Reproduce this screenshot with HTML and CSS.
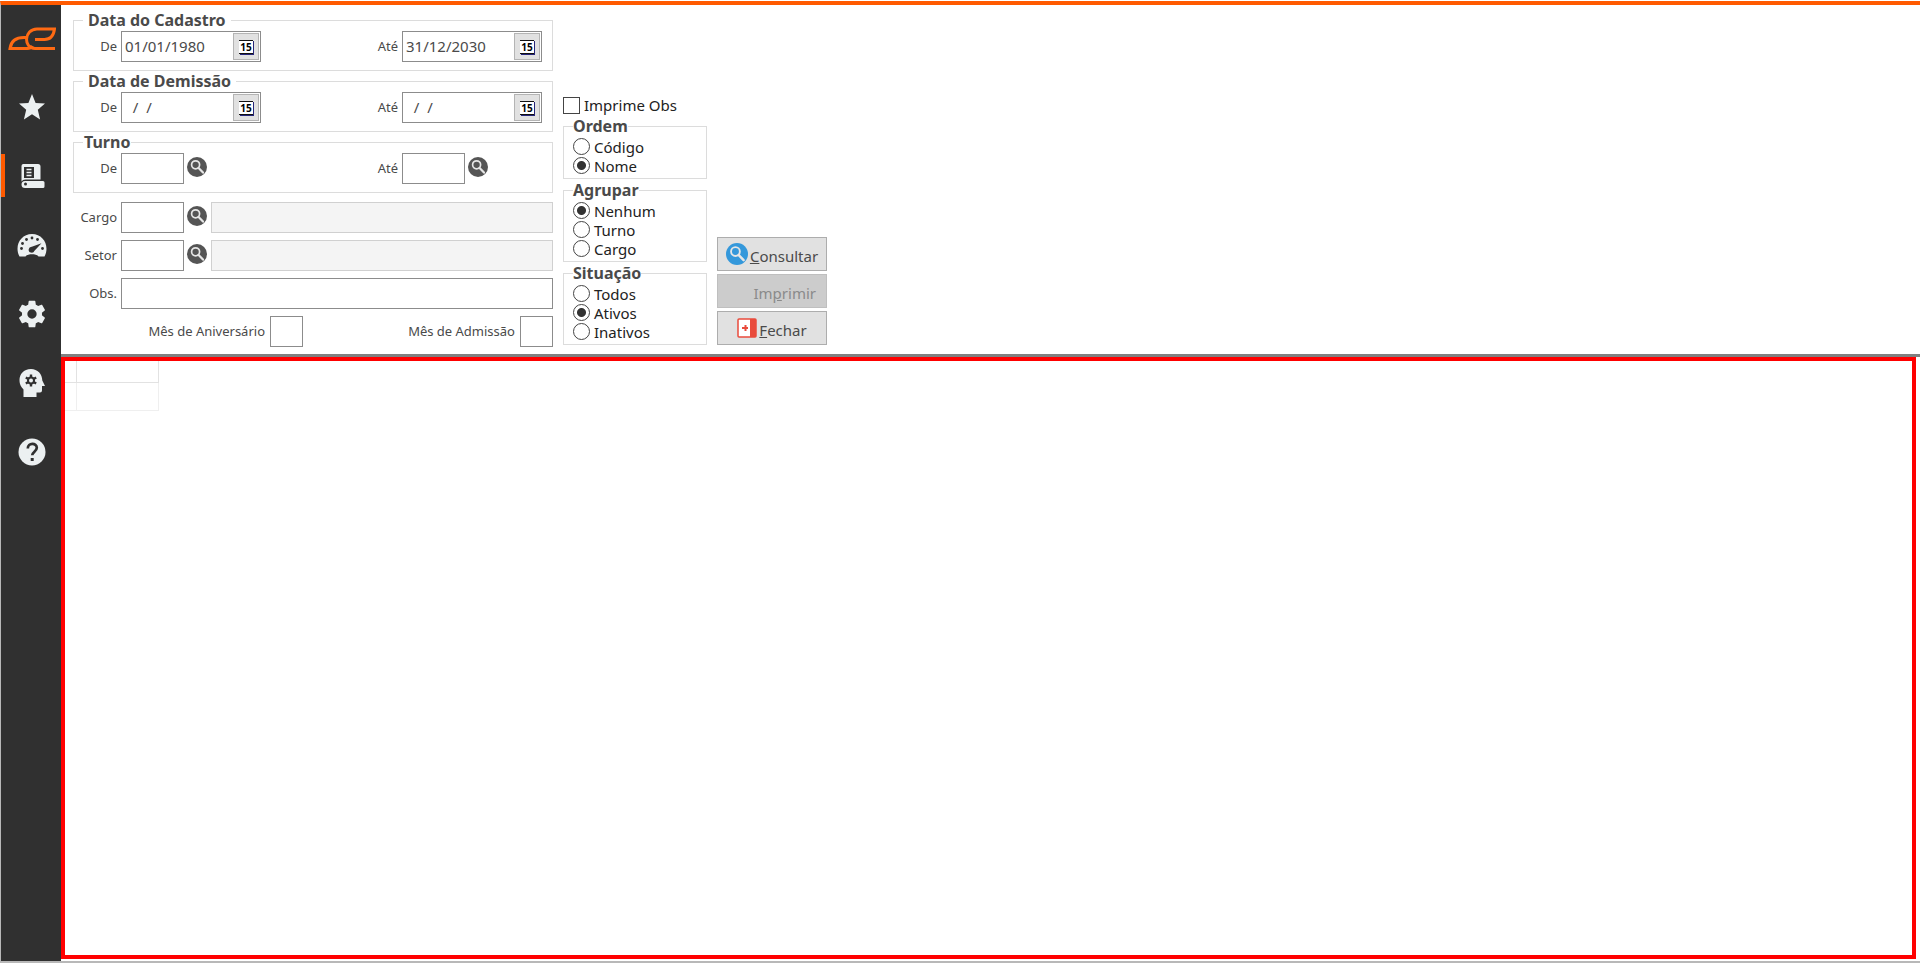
FILE: index.html
```html
<!DOCTYPE html>
<html lang="pt-BR">
<head>
  <meta charset="UTF-8">
  <meta name="viewport" content="width=device-width, initial-scale=1.0">
  <title>Consulta de Funcionários</title>
  <link rel="stylesheet" href="styles.css">
</head>
<body>
  <svg class="sprite" aria-hidden="true">
    <symbol id="lens" viewBox="0 0 20 20">
      <circle cx="10" cy="10" r="10"/>
      <circle cx="8.6" cy="7.8" r="4" fill="none" stroke="#e6e6e6" stroke-width="1.7"/>
      <path d="M11.6 11l4.4 4.6" stroke="#e6e6e6" stroke-width="2.200" stroke-linecap="round"/>
    </symbol>
  </svg>

  <div class="app">
    <nav class="sidebar">
      <a href="#" class="logo" aria-label="Início">
        <svg width="48" height="24" viewBox="0 0 48 24" fill="none" stroke="#ff6a13" stroke-width="3">
          <path d="M47 21.500H27C15 21.500 16 2 29 2h17.500c-1 7.500-4 10.500-10 10.500H27"/>
          <path d="M20 10.500h-4C8 10.500 3 14 2 21.500h17.500c2 0 4-1 5-2.500"/>
        </svg>
      </a>
      <a href="#" class="item" aria-label="Favoritos">
        <svg width="28" height="28" viewBox="0 0 28 28" fill="#ecf0f1">
          <path d="M14 1l3.600 8.900 9.400.7-7.200 6.100 2.300 9.700L14 21.300l-8.100 5.100 2.300-9.700L1 10.600l9.400-.7z"/>
        </svg>
      </a>
      <a href="#" class="item active" aria-label="Cadastros">
        <svg width="28" height="28" viewBox="0 0 28 28" fill="#ecf0f1">
          <path d="M5 2h15a2.500 2.500 0 0 1 2.500 2.500V17.500H7.500c-2 0-3 .7-4 2V4A2 2 0 0 1 5 2z"/>
          <path d="M7 19h18a1.500 1.500 0 0 1 1.500 1.500v4A1.500 1.500 0 0 1 25 26H7a3.500 3.500 0 0 1 0-7z"/>
          <path d="M6 5h10v11H6z" fill="#303030"/>
          <path d="M8.500 7.500h5M8.500 10.500h5M8.500 13.500h5" stroke="#ecf0f1" stroke-width="1.500"/>
          <circle cx="7.500" cy="22" r="1.500" fill="#303030"/>
        </svg>
      </a>
      <a href="#" class="item" aria-label="Painel">
        <svg width="30" height="28" viewBox="0 0 30 28" fill="#ecf0f1">
          <path d="M2.500 25.500C-3 15 3.500 3 15 3s18 12 12.500 22.500h-6c-1.500-3-11.500-3-13 0z"/>
          <g fill="#303030">
            <circle cx="15" cy="7" r="1.400"/><circle cx="9.500" cy="8.500" r="1.400"/><circle cx="20.500" cy="8.500" r="1.400"/>
            <circle cx="5.500" cy="12.500" r="1.400"/><circle cx="4.500" cy="17.500" r="1.400"/><circle cx="25.500" cy="17.500" r="1.400"/>
            <path d="M24.500 12.200l-7 7.500a3 3 0 1 1-2.700-4z"/>
          </g>
        </svg>
      </a>
      <a href="#" class="item" aria-label="Configurações">
        <svg width="32" height="32" viewBox="0 0 24 24" fill="#ecf0f1">
          <path d="M12 15.500A3.500 3.500 0 0 1 8.500 12 3.500 3.500 0 0 1 12 8.500a3.500 3.500 0 0 1 3.500 3.500 3.500 3.500 0 0 1-3.500 3.500m7.430-2.530c.04-.32.07-.64.07-.97s-.03-.66-.07-1l2.110-1.630c.19-.15.24-.42.12-.64l-2-3.460c-.12-.22-.39-.31-.61-.22l-2.490 1c-.52-.39-1.060-.73-1.690-.98l-.37-2.650A.506.506 0 0 0 14 2h-4c-.25 0-.46.18-.5.420l-.37 2.650c-.63.25-1.170.59-1.690.98l-2.490-1c-.22-.09-.49 0-.61.22l-2 3.460c-.13.22-.07.49.12.64L4.570 11c-.04.34-.07.67-.07 1s.03.65.07.97l-2.110 1.660c-.19.15-.25.42-.12.64l2 3.460c.12.22.39.3.61.22l2.490-1.010c.52.4 1.060.74 1.690.99l.37 2.650c.04.24.25.42.5.42h4c.25 0 .46-.18.5-.42l.37-2.650c.63-.26 1.170-.59 1.690-.99l2.490 1.010c.22.08.49 0 .61-.22l2-3.460c.12-.22.07-.49-.12-.64z"/>
        </svg>
      </a>
      <a href="#" class="item" aria-label="Inteligência">
        <svg width="28" height="30" viewBox="0 0 28 30" fill="#ecf0f1">
          <path d="M13 1C5.500 1 1.500 6.500 1.500 12c0 5 2 7 4 9.500V29h13v-4.500h3.500a2 2 0 0 0 2-2V18h3l-2.700-5.500C24.300 6 19.500 1 13 1z"/>
          <path d="M13 6.500v12M7.800 9.500l10.400 6M18.200 9.500l-10.400 6" stroke="#303030" stroke-width="2.400"/>
          <circle cx="13" cy="12.500" r="4" fill="#303030"/>
          <circle cx="13" cy="12.500" r="2"/>
        </svg>
      </a>
      <a href="#" class="item" aria-label="Ajuda">
        <svg width="28" height="28" viewBox="0 0 28 28">
          <circle cx="14" cy="14" r="13.500" fill="#ecf0f1"/>
          <path d="M9.800 10.500c0-6 9-6 9-.7 0 3.700-4.600 4-4.600 7.500" fill="none" stroke="#303030" stroke-width="2.700"/>
          <path d="M12.700 20h3v3h-3z" fill="#303030"/>
        </svg>
      </a>
    </nav>

    <main class="main">
      <form class="filters">
        <div class="fields">
          <fieldset class="group">
            <legend class="wide">Data do Cadastro</legend>
            <div class="range">
              <label for="cadDe">De</label>
              <div class="date">
                <input type="text" id="cadDe" value="01/01/1980">
                <button type="button"><span class="cal">15</span></button>
              </div>
              <label for="cadAte">Até</label>
              <div class="date">
                <input type="text" id="cadAte" value="31/12/2030">
                <button type="button"><span class="cal">15</span></button>
              </div>
            </div>
          </fieldset>

          <fieldset class="group">
            <legend class="wide">Data de Demissão</legend>
            <div class="range">
              <label for="demDe">De</label>
              <div class="date">
                <input type="text" id="demDe" value="  /  /    ">
                <button type="button"><span class="cal">15</span></button>
              </div>
              <label for="demAte">Até</label>
              <div class="date">
                <input type="text" id="demAte" value="  /  /    ">
                <button type="button"><span class="cal">15</span></button>
              </div>
            </div>
          </fieldset>

          <fieldset class="group">
            <legend>Turno</legend>
            <div class="range">
              <label for="turnoDe">De</label>
              <div class="lookup">
                <input type="text" id="turnoDe" class="box code">
                <button type="button" class="search" aria-label="Pesquisar turno"><svg width="20" height="20"><use href="#lens"/></svg></button>
              </div>
              <label for="turnoAte">Até</label>
              <div class="lookup">
                <input type="text" id="turnoAte" class="box code">
                <button type="button" class="search" aria-label="Pesquisar turno"><svg width="20" height="20"><use href="#lens"/></svg></button>
              </div>
            </div>
          </fieldset>

          <div class="rows">
            <div class="row">
              <label for="cargo">Cargo</label>
              <div class="lookup">
                <input type="text" id="cargo" class="box code">
                <button type="button" class="search" aria-label="Pesquisar cargo"><svg width="20" height="20"><use href="#lens"/></svg></button>
                <input type="text" class="box desc" aria-label="Descrição do cargo" disabled>
              </div>
            </div>
            <div class="row">
              <label for="setor">Setor</label>
              <div class="lookup">
                <input type="text" id="setor" class="box code">
                <button type="button" class="search" aria-label="Pesquisar setor"><svg width="20" height="20"><use href="#lens"/></svg></button>
                <input type="text" class="box desc" aria-label="Descrição do setor" disabled>
              </div>
            </div>
            <div class="row">
              <label for="obs">Obs.</label>
              <input type="text" id="obs" class="box">
            </div>
            <div class="months">
              <label for="mesAniv">Mês de Aniversário</label>
              <input type="text" id="mesAniv" class="box">
              <label for="mesAdm">Mês de Admissão</label>
              <input type="text" id="mesAdm" class="box">
            </div>
          </div>
        </div>

        <div class="options">
          <label class="check"><input type="checkbox" name="imprimeObs"> Imprime Obs</label>

          <fieldset class="group choices">
            <legend>Ordem</legend>
            <label><input type="radio" name="ordem"><span>Código</span></label>
            <label><input type="radio" name="ordem" checked><span>Nome</span></label>
          </fieldset>

          <fieldset class="group choices">
            <legend>Agrupar</legend>
            <label><input type="radio" name="agrupar" checked><span>Nenhum</span></label>
            <label><input type="radio" name="agrupar"><span>Turno</span></label>
            <label><input type="radio" name="agrupar"><span>Cargo</span></label>
          </fieldset>

          <fieldset class="group choices">
            <legend>Situação</legend>
            <label><input type="radio" name="situacao"><span>Todos</span></label>
            <label><input type="radio" name="situacao" checked><span>Ativos</span></label>
            <label><input type="radio" name="situacao"><span>Inativos</span></label>
          </fieldset>
        </div>

        <div class="actions">
          <button type="button" class="btn">
            <svg class="blue" width="22" height="22"><use href="#lens"/></svg>
            <span><u>C</u>onsultar</span>
          </button>
          <button type="button" class="btn print" disabled><span>Im<u>p</u>rimir</span></button>
          <button type="button" class="btn">
            <svg width="20" height="20" viewBox="0 0 20 20">
              <rect x="1" y="1" width="18" height="18" rx="1" fill="#fff" stroke="#e94b3c" stroke-width="1.500"/>
              <path d="M13 1h6v18h-6z" fill="#e94b3c"/>
              <path d="M5 10h6M8.500 7v6" stroke="#e94b3c" stroke-width="2"/>
            </svg>
            <span><u>F</u>echar</span>
          </button>
        </div>
      </form>

      <section class="results">
        <table class="grid">
          <thead><tr><th></th><th></th></tr></thead>
          <tbody><tr><td></td><td></td></tr></tbody>
        </table>
      </section>
    </main>
  </div>
</body>
</html>
```
FILE: styles.css
```css
:root {
  --orange: #ff5a00;
  --dark: #303030;
  --line: #dcdcdc;
  --border: #8c8c8c;
  --text: #4a4a4a;
}

* {
  box-sizing: border-box;
}

body {
  margin: 0;
  font-family: "Noto Sans", "Open Sans", sans-serif;
  font-size: 15px;
  color: var(--text);
  background: #fff;
}

input,
button {
  font-family: inherit;
  font-size: inherit;
  color: inherit;
}

.sprite {
  display: block;
  width: 0;
  height: 0;
}

.app {
  display: flex;
  min-height: calc(100vh - 1px);
  margin-top: 1px;
  border-top: 4px solid var(--orange);
  border-left: 1px solid #b8b8b8;
  border-bottom: 2px solid #b8b8b8;
}

/* Sidebar */
.sidebar {
  display: flex;
  flex-direction: column;
  flex: none;
  width: 60px;
  background: var(--dark);
}

.sidebar a {
  display: flex;
  align-items: center;
  justify-content: center;
  height: 69px;
  padding-left: 2px;
}

.sidebar .logo {
  height: 67px;
}

.sidebar .item.active {
  background: linear-gradient(var(--orange), var(--orange)) left center / 4px 43px no-repeat;
}

/* Filters */
.main {
  display: flex;
  flex-direction: column;
  flex: 1;
  min-width: 0;
}

.filters {
  display: flex;
  gap: 10px;
  padding: 5px 12px 7px;
  border-bottom: 3px solid #808080;
}

.fields {
  width: 480px;
}

.group {
  min-width: 0;
  margin: 0;
  padding: 1px 9px 8px 0;
  border: 1px solid var(--line);
}

legend {
  margin-left: 9px;
  padding: 0 1px;
  font-size: 16px;
  font-weight: bold;
  line-height: 20px;
}

legend.wide {
  padding: 0 5px;
}

.range {
  display: grid;
  grid-template-columns: 43px 240px 33px 1fr;
  gap: 4px;
}

.fields label {
  font-size: 13px;
  line-height: 30px;
  text-align: right;
  white-space: nowrap;
}

.date {
  display: flex;
  width: 140px;
  height: 31px;
  padding: 1px;
  border: 1px solid var(--border);
}

.date input {
  flex: 1;
  min-width: 0;
  padding: 0 2px 2px;
  border: 0;
  outline: 0;
  background: none;
}

.date button {
  display: flex;
  align-items: center;
  justify-content: center;
  width: 26px;
  padding: 0;
  border: 1px solid #b4b4b4;
  background: #e1e1e1;
}

.cal {
  width: 14px;
  border-top: 1px solid #111;
  border-bottom: 1px solid #111;
  background: #fff;
  box-shadow: 1px 1px #26267a;
  color: #000;
  font-size: 10px;
  font-weight: bold;
  line-height: 12px;
}

.box {
  height: 31px;
  padding: 0 4px;
  border: 1px solid var(--border);
  background: #fff;
}

.lookup {
  display: flex;
  min-width: 0;
}

.code {
  width: 63px;
}

.search {
  align-self: flex-start;
  display: flex;
  margin: 4px 4px 0 3px;
  padding: 0;
  border: 0;
  background: none;
}

.search svg {
  fill: #555;
}

.desc {
  flex: 1;
  min-width: 0;
  border-color: #d0d0d0;
  background: #f4f4f4;
}

.rows {
  display: flex;
  flex-direction: column;
  gap: 7px;
  margin-top: 9px;
}

.row {
  display: grid;
  grid-template-columns: 44px 1fr;
  gap: 4px;
}

.months {
  display: grid;
  grid-template-columns: 192px 33px 1fr 33px;
  gap: 5px;
}

/* Options */
.options {
  display: flex;
  flex-direction: column;
  justify-content: flex-end;
  gap: 1px;
  width: 144px;
  padding-bottom: 2px;
  color: #222;
}

.check {
  display: flex;
  align-items: center;
  gap: 4px;
  line-height: 20px;
}

.options input {
  appearance: none;
  flex: none;
  width: 17px;
  height: 17px;
  margin: 0;
  border: 1px solid #444;
  background: #fff;
}

.choices {
  padding: 1px 9px 3px;
}

.choices legend {
  margin-left: 0;
  padding: 0;
  color: var(--text);
}

.choices label {
  display: flex;
  align-items: center;
  gap: 4px;
  height: 19px;
}

.choices input {
  border-radius: 50%;
}

.choices input:checked {
  background: radial-gradient(circle, #333 4px, #fff 5px);
}

/* Buttons */
.actions {
  display: flex;
  flex-direction: column;
  justify-content: flex-end;
  gap: 3px;
  width: 110px;
  padding-bottom: 2px;
}

.btn {
  display: flex;
  align-items: center;
  justify-content: center;
  gap: 2px;
  height: 34px;
  padding: 0;
  border: 1px solid #adadad;
  background: #e1e1e1;
}

.btn span {
  padding-top: 3px;
}

.btn .blue {
  fill: #3498db;
}

.print {
  justify-content: flex-end;
  padding-right: 10px;
  border-color: #bfbfbf;
  background: #ccc;
  color: #8a8a8a;
}

/* Results */
.results {
  flex: 1;
  margin: 0 4px 2px 0;
  border: 4px solid #f00;
}

.grid {
  border-collapse: collapse;
}

.grid th,
.grid td {
  padding: 0;
  border: 1px solid #e2e2e2;
  border-width: 0 1px 1px 0;
}

.grid th {
  width: 82px;
  height: 21px;
}

.grid td {
  height: 28px;
  border-color: #efefef;
}

.grid th:first-child {
  width: 11px;
}
```
